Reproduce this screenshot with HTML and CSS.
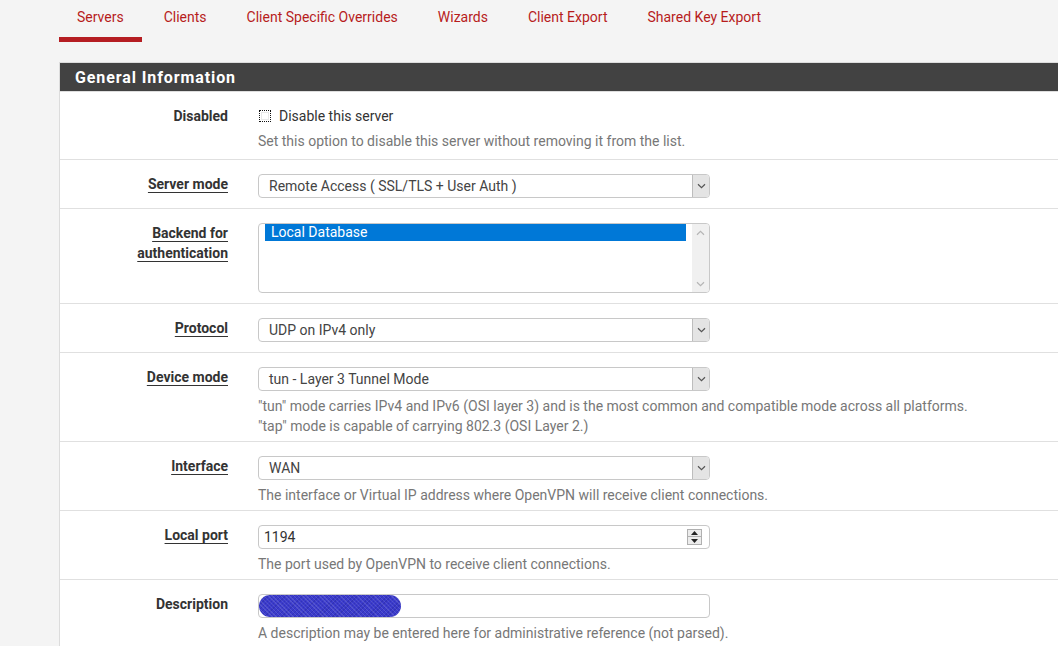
FILE: index.html
```html
<!DOCTYPE html>
<html lang="en">
<head>
<meta charset="utf-8">
<title>OpenVPN Servers</title>
<link rel="stylesheet" href="styles.css">
</head>
<body>
<div class="page">
  <ul class="tabs">
    <li class="tab active">Servers</li>
    <li class="tab">Clients</li>
    <li class="tab">Client Specific Overrides</li>
    <li class="tab">Wizards</li>
    <li class="tab">Client Export</li>
    <li class="tab">Shared Key Export</li>
  </ul>

  <div class="panel">
    <div class="panel-heading"><h2 class="panel-title">General Information</h2></div>

    <div class="row row-check">
      <div class="label"><span>Disabled</span></div>
      <div class="field">
        <div class="check"><span class="checkbox"></span>Disable this server</div>
        <div class="help">Set this option to disable this server without removing it from the list.</div>
      </div>
    </div>

    <div class="row">
      <div class="label"><span class="req">Server mode</span></div>
      <div class="field">
        <div class="select"><span class="select-text">Remote Access ( SSL/TLS + User Auth )</span><span class="select-arrow"><svg width="9" height="6" viewBox="0 0 9 6"><path d="M1 1.2 L4.5 4.6 L8 1.2" fill="none" stroke="#555" stroke-width="1.2"/></svg></span></div>
      </div>
    </div>

    <div class="row">
      <div class="label"><span class="req">Backend for authentication</span></div>
      <div class="field">
        <div class="listbox">
          <div class="list-options"><div class="option selected">Local Database</div></div>
          <div class="list-scroll">
            <svg width="9" height="6" viewBox="0 0 9 6"><path d="M1 4.8 L4.5 1.4 L8 4.8" fill="none" stroke="#b5b5b5" stroke-width="1.2"/></svg>
            <svg width="9" height="6" viewBox="0 0 9 6"><path d="M1 1.2 L4.5 4.6 L8 1.2" fill="none" stroke="#b5b5b5" stroke-width="1.2"/></svg>
          </div>
        </div>
      </div>
    </div>

    <div class="row">
      <div class="label"><span class="req">Protocol</span></div>
      <div class="field">
        <div class="select"><span class="select-text">UDP on IPv4 only</span><span class="select-arrow"><svg width="9" height="6" viewBox="0 0 9 6"><path d="M1 1.2 L4.5 4.6 L8 1.2" fill="none" stroke="#555" stroke-width="1.2"/></svg></span></div>
      </div>
    </div>

    <div class="row has-help">
      <div class="label"><span class="req">Device mode</span></div>
      <div class="field">
        <div class="select"><span class="select-text">tun - Layer 3 Tunnel Mode</span><span class="select-arrow"><svg width="9" height="6" viewBox="0 0 9 6"><path d="M1 1.2 L4.5 4.6 L8 1.2" fill="none" stroke="#555" stroke-width="1.2"/></svg></span></div>
        <div class="help">"tun" mode carries IPv4 and IPv6 (OSI layer 3) and is the most common and compatible mode across all platforms.<br>"tap" mode is capable of carrying 802.3 (OSI Layer 2.)</div>
      </div>
    </div>

    <div class="row has-help">
      <div class="label"><span class="req">Interface</span></div>
      <div class="field">
        <div class="select"><span class="select-text">WAN</span><span class="select-arrow"><svg width="9" height="6" viewBox="0 0 9 6"><path d="M1 1.2 L4.5 4.6 L8 1.2" fill="none" stroke="#555" stroke-width="1.2"/></svg></span></div>
        <div class="help">The interface or Virtual IP address where OpenVPN will receive client connections.</div>
      </div>
    </div>

    <div class="row has-help">
      <div class="label"><span class="req">Local port</span></div>
      <div class="field">
        <div class="input"><span class="input-text">1194</span>
          <span class="spinner">
            <span class="spin"><svg width="7" height="4" viewBox="0 0 7 4"><path d="M0 4 L3.5 0 L7 4 Z" fill="#222"/></svg></span>
            <span class="spin"><svg width="7" height="4" viewBox="0 0 7 4"><path d="M0 0 L3.5 4 L7 0 Z" fill="#222"/></svg></span>
          </span>
        </div>
        <div class="help">The port used by OpenVPN to receive client connections.</div>
      </div>
    </div>

    <div class="row has-help">
      <div class="label"><span>Description</span></div>
      <div class="field">
        <div class="input"><span class="scribble"></span></div>
        <div class="help">A description may be entered here for administrative reference (not parsed).</div>
      </div>
    </div>
  </div>
</div>
</body>
</html>
```

FILE: styles.css
```css
html, body {
  margin: 0;
  padding: 0;
  background: #f4f4f4;
  overflow: hidden;
}
body {
  font-family: Roboto, "Liberation Sans", Arial, sans-serif;
  font-size: 14px;
  line-height: 20px;
  color: #333;
}
.page {
  padding-left: 59px;
}
.tabs {
  list-style: none;
  margin: 0 0 20px 0;
  padding: 0;
  display: flex;
  gap: 4px;
}
.tab {
  padding: 7px 18px 10px;
  color: #b71c1c;
  border-bottom: 5px solid transparent;
  line-height: 20px;
}
.tab.active {
  border-bottom-color: #b51d22;
}
.panel {
  background: #fff;
  border-left: 1px solid #dcdcdc;
  border-top: 1px solid #dcdcdc;
  margin-right: -20px;
  min-height: 600px;
}
.panel-heading {
  background: #424242;
  height: 28px;
  padding-left: 15px;
  border-bottom: 1px solid #dedede;
}
.panel-title {
  margin: 0;
  color: #fff;
  font-size: 16px;
  font-weight: 700;
  letter-spacing: 0.9px;
  line-height: 29px;
}
.row {
  display: flex;
  padding: 14px 0 10px;
  border-top: 1px solid #e0e0e0;
}
.panel-heading + .row {
  border-top: none;
}
.row.row-check {
  padding-bottom: 8px;
}
.row.has-help {
  padding-bottom: 5px;
}
.label {
  box-sizing: border-box;
  width: 183px;
  flex: none;
  padding-right: 15px;
  text-align: right;
  font-weight: 700;
  color: #333;
}
.label .req {
  text-decoration: underline;
  text-underline-offset: 3px;
  text-decoration-thickness: 1px;
}
.field {
  padding-left: 15px;
  width: 452px;
  flex: none;
}
.check {
  display: flex;
  align-items: center;
  color: #333;
}
.checkbox {
  box-sizing: border-box;
  width: 12px;
  height: 12px;
  margin: 0 8px 0 1px;
  border: 1px dotted #111;
  box-shadow: inset 0 0 0 1px #fff, inset 0 0 0 2px #e8e8e8;
  background: #fff;
}
.help {
  margin-top: 5px;
  font-size: 14px;
  line-height: 20px;
  color: #777;
  white-space: nowrap;
}
.select, .input {
  box-sizing: border-box;
  height: 24px;
  border: 1px solid #c8c8c8;
  border-radius: 4px;
  display: flex;
  align-items: stretch;
  background: #fff;
  overflow: hidden;
}
.select-text {
  flex: 1;
  padding-left: 10px;
  line-height: 23px;
  color: #444;
}
.select-arrow {
  width: 16px;
  border-left: 1px solid #bdbdbd;
  background: #e4e4e4;
  display: flex;
  align-items: center;
  justify-content: center;
}
.listbox {
  box-sizing: border-box;
  height: 70px;
  border: 1px solid #c8c8c8;
  border-radius: 4px;
  display: flex;
  overflow: hidden;
}
.list-options {
  flex: 1;
  padding: 0 6px;
}
.option {
  height: 17px;
  line-height: 17px;
  padding-left: 6px;
}
.option.selected {
  background: #0078d7;
  color: #fff;
}
.list-scroll {
  width: 17px;
  background: #f0f0f0;
  display: flex;
  flex-direction: column;
  justify-content: space-between;
  align-items: center;
  padding: 6px 0 5px;
}
.input-text {
  flex: 1;
  padding-left: 5px;
  line-height: 23px;
  color: #333;
}
.spinner {
  display: flex;
  flex-direction: column;
  justify-content: center;
  margin-right: 7px;
}
.spin {
  box-sizing: border-box;
  width: 15px;
  height: 8px;
  border: 1px solid #b0b0b0;
  background: #ececec;
  display: flex;
  align-items: center;
  justify-content: center;
}
.spin + .spin {
  border-top: none;
  height: 8px;
}
.scribble {
  width: 142px;
  margin-left: 0;
  border-radius: 11px;
  background:
    repeating-linear-gradient(45deg, rgba(255,255,255,0.12) 0 1px, transparent 1px 3px),
    repeating-linear-gradient(-45deg, rgba(0,0,80,0.15) 0 1px, transparent 1px 3px),
    #3b3bcb;
}
```
